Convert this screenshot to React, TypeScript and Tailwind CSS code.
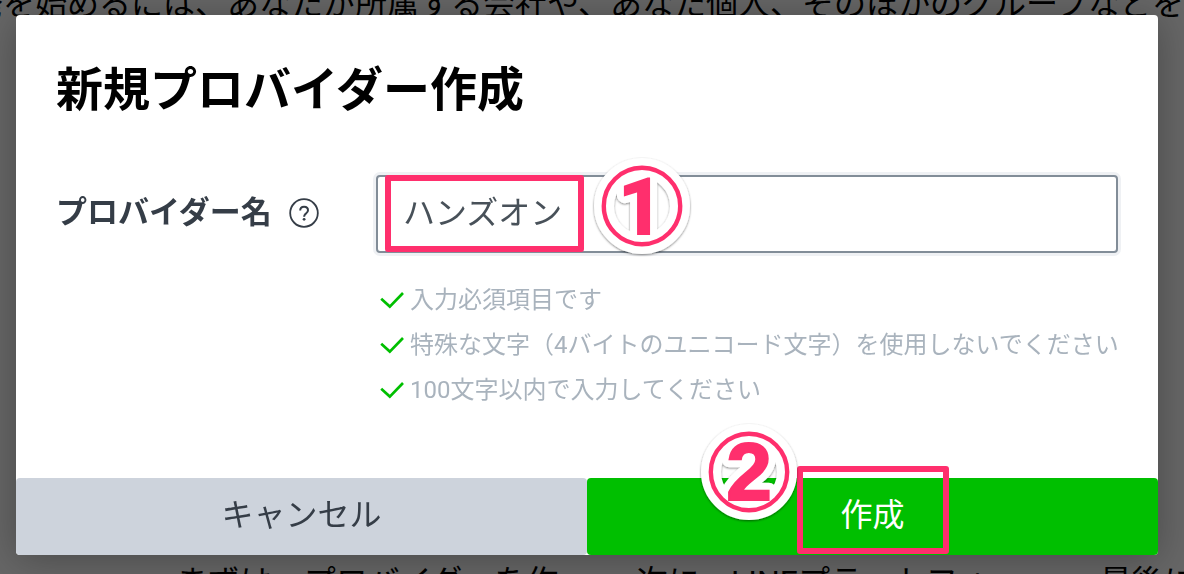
import { useId, useState } from 'react';

const rules = [
  '入力必須項目です',
  '特殊な文字（4バイトのユニコード文字）を使用しないでください',
  '100文字以内で入力してください',
];

function HelpIcon() {
  return (
    <svg viewBox="0 0 32 32" className="size-8" fill="none" stroke="currentColor" aria-hidden="true">
      <circle cx="16" cy="16" r="13.8" strokeWidth="1.8" />
      <path d="M12.2 13.4c0-2.3 1.6-3.7 3.9-3.7s3.9 1.4 3.9 3.5c0 1.7-.9 2.5-2 3.4-1.2 1-1.9 1.7-1.9 3.1" strokeWidth="2" />
      <circle cx="16.1" cy="22.3" r="1.4" fill="currentColor" stroke="none" />
    </svg>
  );
}

function CheckIcon() {
  return (
    <svg viewBox="0 0 24 24" className="size-6 shrink-0" fill="none" stroke="#00bf00" strokeWidth="2.7" aria-hidden="true">
      <path d="M1.2 9.8 L9.8 17.6 L23 4" />
    </svg>
  );
}

function StepBadge({ step }: { step: string }) {
  const id = useId();
  const digit = {
    x: step === '1' ? 51 : 52,
    y: 79,
    textAnchor: 'middle' as const,
    fontSize: step === '1' ? 78 : 82,
    fontWeight: 700,
    fontFamily: step === '1' ? 'Roboto, sans-serif' : '"Liberation Sans", sans-serif',
  };
  return (
    <svg viewBox="0 0 104 104" className="size-[104px] overflow-visible">
      <defs>
        <filter id={id} filterUnits="userSpaceOnUse" x="-10" y="-10" width="124" height="124">
          <feDropShadow dx="0" dy="1" stdDeviation="1.2" floodColor="#000" floodOpacity="0.5" />
        </filter>
        <clipPath id={`${id}-disc`}>
          <circle cx="52" cy="51" r="47" />
        </clipPath>
      </defs>
      <g filter={`url(#${id})`} fill="#fff" stroke="#fff" strokeLinejoin="round">
        <circle cx="52" cy="51" r="38" fill="none" strokeWidth="20" />
        <g clipPath={`url(#${id}-disc)`}>
          <text {...digit} strokeWidth="16" aria-hidden="true">{step}</text>
        </g>
      </g>
      <circle cx="52" cy="51" r="38.2" fill="none" stroke="#ff2f6d" strokeWidth="4.4" />
      <text {...digit} fill="#ff2f6d" stroke="#ff2f6d" strokeWidth="2">{step}</text>
    </svg>
  );
}

export default function App() {
  const [name, setName] = useState('ハンズオン');
  return (
    <div className="relative h-screen overflow-hidden bg-white text-black font-[Roboto,'Noto_Sans_CJK_JP',sans-serif]">
      <main className="text-[32px] leading-12 whitespace-nowrap">
        <p className="-mt-5 -ml-[61px]">
          開発を始めるには、あなたが所属する会社や、あなた個人、そのほかのグループなどを表す
        </p>
        <div className="mt-[530px] ml-[136px] grid w-[1386px] grid-cols-3 text-center">
          <p>まずは、プロバイダーを作</p>
          <p>次に、LINEプラットフォー</p>
          <p>最後に、チャネルを作成し</p>
        </div>
      </main>

      <div className="fixed inset-0 bg-black/60 pt-[15px] pr-[26px] pl-4">
        <form
          role="dialog"
          aria-labelledby="dialog-title"
          onSubmit={(e) => e.preventDefault()}
          className="rounded bg-white shadow-[0_4px_40px_rgba(0,0,0,0.3)]"
        >
          <div className="px-10 pt-[37px] pb-[65px]">
            <h1 id="dialog-title" className="text-[47px] leading-[76px] font-bold">新規プロバイダー作成</h1>

            <div className="mt-[47px] flex text-[#353d47]">
              <div className="flex h-[78px] w-80 shrink-0 items-center gap-4 pb-0.5">
                <label htmlFor="provider" className="text-[31px] font-bold">プロバイダー名</label>
                <button type="button" aria-label="ヘルプ"><HelpIcon /></button>
              </div>
              <div className="min-w-0 flex-1">
                <div className="relative">
                  <input
                    id="provider"
                    value={name}
                    onChange={(e) => setName(e.target.value)}
                    className="block h-[78px] w-full rounded border-2 border-[#828d98] bg-white pr-6 pb-2 pl-[25px] text-[32px] text-[#485159] ring-3 ring-[#eff1f4] outline-none"
                  />
                  <div className="pointer-events-none absolute top-0 left-[9px] h-[77px] w-[199px] rounded-[3px] border-6 border-[#ff2f6d]" />
                  <div className="pointer-events-none absolute -top-5 left-[214px]"><StepBadge step="1" /></div>
                </div>
                <ul className="mt-[25px] text-2xl leading-[45px] whitespace-nowrap text-[#a9b3bd]">
                  {rules.map((rule) => (
                    <li key={rule} className="flex items-center gap-[6px] pl-1">
                      <CheckIcon />
                      {rule}
                    </li>
                  ))}
                </ul>
              </div>
            </div>
          </div>

          <div className="grid grid-cols-2 text-[32px]">
            <button type="button" className="h-[77px] rounded bg-[#cdd3dc] pb-1 text-[#353d47]">キャンセル</button>
            <div className="relative">
              <button type="submit" className="h-[77px] w-full rounded bg-[#00bf00] pb-1 text-white">作成</button>
              <div className="pointer-events-none absolute -top-3 left-[210px] h-[88px] w-[152px] rounded-[3px] border-6 border-[#ff2f6d]" />
              <div className="pointer-events-none absolute -top-[57px] left-[110px]"><StepBadge step="2" /></div>
            </div>
          </div>
        </form>
      </div>
    </div>
  );
}
